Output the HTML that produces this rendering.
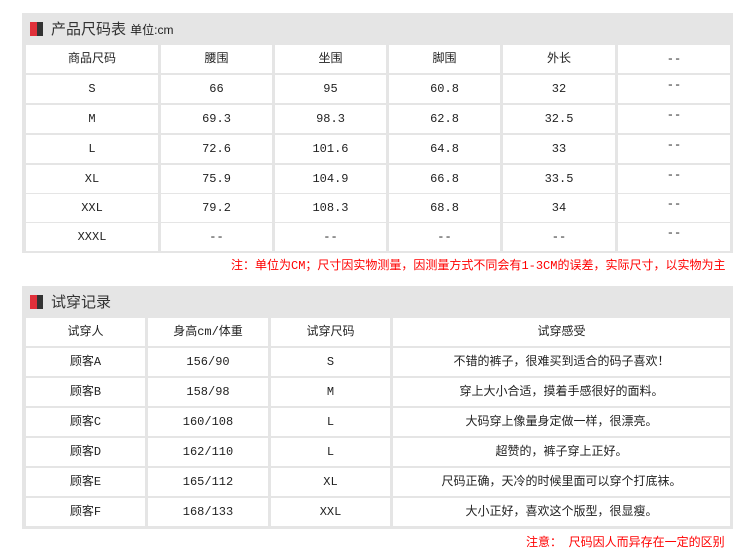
<!DOCTYPE html>
<html><head><meta charset="utf-8"><style>
body{margin:0;width:750px;height:547px;background:#fff;position:relative;font-family:"Liberation Mono","Noto Sans CJK SC",monospace;font-size:12px;color:#222;overflow:hidden}
.panel{position:absolute;left:22px;width:711px;background:#e5e5e5}
.hd{height:31px;position:relative}
.ic{position:absolute;left:8px;top:9px;width:7px;height:14px;background:#e0303a}
.ic2{position:absolute;left:15px;top:9px;width:6px;height:14px;background:#333}
.tt{position:absolute;left:29px;top:5px;font-family:"Liberation Sans","Noto Sans CJK SC",sans-serif;font-size:15px;color:#333}
.tt small{font-size:12px;color:#222}
.c{position:absolute;background:#fff;text-align:center;line-height:28px;height:28px;font-family:"Liberation Mono","Noto Sans CJK SC",monospace}
.red{position:absolute;color:#f00;font-family:"Liberation Sans","Noto Sans CJK SC",sans-serif;font-size:12px;white-space:nowrap}
.red span{font-family:"Liberation Mono",monospace}
</style></head><body>
<div class="panel" style="top:13px;height:240px">
<div class="hd"><div class="ic"></div><div class="ic2"></div><div class="tt">产品尺码表 <small>单位:cm</small></div></div>
</div>
<div class="red" style="left:231px;top:256px">注：单位为<span>CM</span>；尺寸因实物测量，因测量方式不同会有<span>1-3CM</span>的误差，实际尺寸，以实物为主</div>
<div class="panel" style="top:286px;height:243px">
<div class="hd"><div class="ic"></div><div class="ic2"></div><div class="tt">试穿记录</div></div>
</div>
<div class="red" style="left:526px;top:533px">注意：&nbsp; 尺码因人而异存在一定的区别</div>
<div id="t1"></div>
<script>
var x1=[[26,132],[161,111],[275,111],[389,111],[503,112],[618,112]];
var y1=[45,75,105,135,165,194,223];
var d1=[["商品尺码","腰围","坐围","脚围","外长","--"],["S","66","95","60.8","32","--"],["M","69.3","98.3","62.8","32.5","--"],["L","72.6","101.6","64.8","33","--"],["XL","75.9","104.9","66.8","33.5","--"],["XXL","79.2","108.3","68.8","34","--"],["XXXL","--","--","--","--","--"]];
var x2=[[26,119],[148,120],[271,119],[393,337]];
var y2=[318,348,378,408,438,468,498];
var d2=[["试穿人","身高cm/体重","试穿尺码","试穿感受"],["顾客A","156/90","S","不错的裤子，很难买到适合的码子喜欢！"],["顾客B","158/98","M","穿上大小合适，摸着手感很好的面料。"],["顾客C","160/108","L","大码穿上像量身定做一样，很漂亮。"],["顾客D","162/110","L","超赞的，裤子穿上正好。"],["顾客E","165/112","XL","尺码正确，天冷的时候里面可以穿个打底袜。"],["顾客F","168/133","XXL","大小正好，喜欢这个版型，很显瘦。"]];
var h="";
for(var r=0;r<7;r++)for(var c=0;c<6;c++){var s=(c==5&&r>0)?"line-height:20px;":"";h+='<div class="c" style="'+s+'left:'+x1[c][0]+'px;top:'+y1[r]+'px;width:'+x1[c][1]+'px">'+d1[r][c]+'</div>';}
for(var r=0;r<7;r++)for(var c=0;c<4;c++){h+='<div class="c" style="left:'+x2[c][0]+'px;top:'+y2[r]+'px;width:'+x2[c][1]+'px">'+d2[r][c]+'</div>';}
document.getElementById("t1").innerHTML=h;
</script>
</body></html>
